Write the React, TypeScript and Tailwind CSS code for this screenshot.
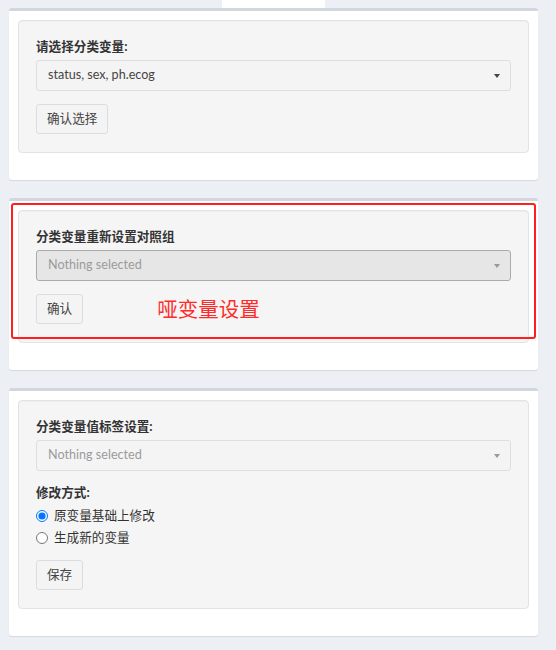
import React from "react"

const font = { fontFamily: '"Lato", "Noto Sans CJK SC", sans-serif' }

const Caret = ({ light }: { light?: boolean }) => (
  <span
    className={
      "ml-auto mr-[10px] h-0 w-0 border-l-[3.5px] border-r-[3.5px] border-t-[4px] border-l-transparent border-r-transparent " +
      (light ? "border-t-[#9a9a9a]" : "border-t-[#444]")
    }
  />
)

const Select = ({ text, placeholder, disabled }: { text: string; placeholder?: boolean; disabled?: boolean }) => (
  <div
    className={
      "flex h-[31px] w-full items-center rounded-[3px] border pl-[11px] text-[12.6px] " +
      (disabled ? "border-[#ababab] bg-[#e6e6e6]" : "border-[#dedede] bg-[#f4f4f4]")
    }
  >
    <span className={placeholder ? "text-[#9b9b9b]" : "text-[#444]"}>{text}</span>
    <Caret light={placeholder} />
  </div>
)

const Btn = ({ children }: { children: React.ReactNode }) => (
  <button className="flex h-[30px] items-center rounded-[3px] border border-[#dcdcdc] bg-[#f4f4f4] px-[10px] text-[12.6px] text-[#444]">
    {children}
  </button>
)

const Label = ({ children }: { children: React.ReactNode }) => (
  <div className="mb-[4px] h-[18px] text-[12.6px] font-bold leading-[18px] text-[#333]">{children}</div>
)

const Card = ({ children, className }: { children: React.ReactNode; className?: string }) => (
  <div
    className={
      "relative ml-[9px] mr-[18px] rounded-[3px] border-t-[3px] border-[#d2d6de] bg-white px-[9px] pb-[27px] pt-[9px] shadow-[0_1px_1px_rgba(0,0,0,0.1)] " +
      (className ?? "")
    }
  >
    {children}
  </div>
)

const Well = ({ children }: { children: React.ReactNode }) => (
  <div className="rounded-[4px] border border-[#e3e3e3] bg-[#f5f5f5] px-[17px] pb-[18px] pt-[17px] shadow-[inset_0_1px_1px_rgba(0,0,0,0.03)]">
    {children}
  </div>
)

export default function App() {
  return (
    <div className="min-h-[650px] w-full bg-[#ecf0f5]" style={font}>
      <div className="h-[8px]">
        <div className="ml-[222px] h-[8px] w-[103px] bg-white" />
      </div>

      <Card>
        <Well>
          <Label>请选择分类变量:</Label>
          <Select text="status, sex, ph.ecog" />
          <div className="mt-[13px]">
            <Btn>确认选择</Btn>
          </div>
        </Well>
      </Card>

      <Card className="mt-[18px]">
        <Well>
          <Label>分类变量重新设置对照组</Label>
          <Select text="Nothing selected" placeholder disabled />
          <div className="mt-[13px] flex items-center">
            <Btn>确认</Btn>
            <span className="ml-[74px] text-[20.5px] leading-[24px] text-[#ff2b2b]">哑变量设置</span>
          </div>
        </Well>
        <div className="pointer-events-none absolute left-[2px] top-[2px] h-[136px] w-[525px] rounded-[3px] border-2 border-[#ff1f1f]" />
      </Card>

      <Card className="mt-[18px]">
        <Well>
          <Label>分类变量值标签设置:</Label>
          <Select text="Nothing selected" placeholder />
          <div className="mt-[13px]">
            <Label>修改方式:</Label>
          </div>
          <div className="mt-[5px] flex flex-col gap-[4px] text-[12.6px] text-[#333]">
            <label className="flex h-[18px] items-center gap-[6px]">
              <input type="radio" name="mode" defaultChecked className="m-0 h-[12px] w-[12px] accent-[#0075ff]" />
              <span>原变量基础上修改</span>
            </label>
            <label className="flex h-[18px] items-center gap-[6px]">
              <input type="radio" name="mode" className="m-0 h-[12px] w-[12px] accent-[#0075ff]" />
              <span>生成新的变量</span>
            </label>
          </div>
          <div className="mt-[13px]">
            <Btn>保存</Btn>
          </div>
        </Well>
      </Card>
    </div>
  )
}
